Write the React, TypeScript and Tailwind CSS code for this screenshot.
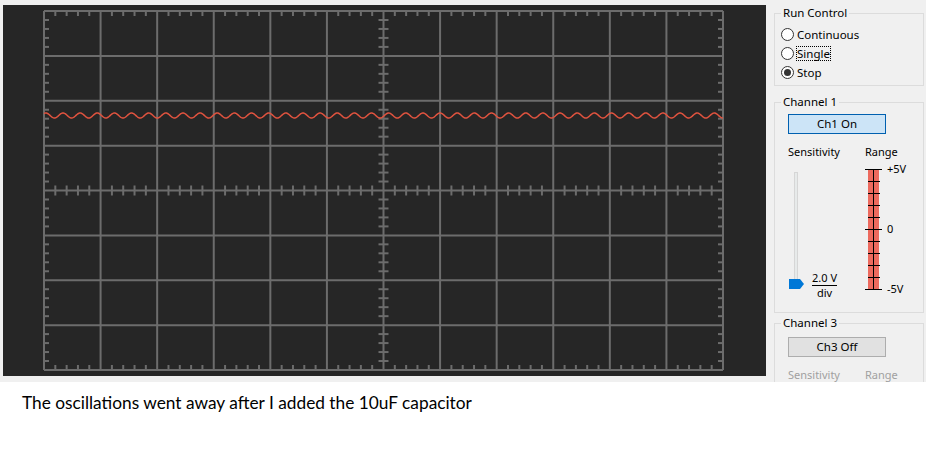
import React from "react";

// scope grid geometry, relative to the dark panel
const L = 41;
const T = 6;
const W = 679;
const H = 359;
const DX = W / 12;
const DY = H / 8;
const GRID = "#6c6c6c";

function ScopeGrid() {
  const items: React.ReactNode[] = [];
  for (let i = 0; i <= 12; i++) {
    const x = L + i * DX;
    items.push(<line key={"v" + i} x1={x} y1={T} x2={x} y2={T + H} />);
  }
  for (let j = 0; j <= 8; j++) {
    const y = T + j * DY;
    items.push(<line key={"h" + j} x1={L} y1={y} x2={L + W} y2={y} />);
  }
  const cx = L + W / 2;
  const cy = T + H / 2;
  // minor ticks along x
  for (let i = 1; i < 60; i++) {
    if (i % 5 === 0) continue;
    const x = L + (i * DX) / 5;
    items.push(<line key={"tt" + i} x1={x} y1={T} x2={x} y2={T + 5} />);
    items.push(<line key={"tb" + i} x1={x} y1={T + H - 5} x2={x} y2={T + H} />);
    items.push(<line key={"tc" + i} x1={x} y1={cy - 5} x2={x} y2={cy + 5} />);
  }
  // minor ticks along y
  for (let j = 1; j < 40; j++) {
    if (j % 5 === 0) continue;
    const y = T + (j * DY) / 5;
    items.push(<line key={"tl" + j} x1={L} y1={y} x2={L + 5} y2={y} />);
    items.push(<line key={"tr" + j} x1={L + W - 5} y1={y} x2={L + W} y2={y} />);
    items.push(<line key={"tm" + j} x1={cx - 5} y1={y} x2={cx + 5} y2={y} />);
  }

  const pts: string[] = [];
  for (let x = L; x <= L + W; x += 0.5) {
    const y = 110.5 - 2.5 * Math.cos((2 * Math.PI * (x - 60)) / 17.14);
    pts.push(`${x.toFixed(1)},${y.toFixed(2)}`);
  }

  return (
    <svg width="763" height="371" className="block">
      <g stroke={GRID} strokeWidth="2">{items}</g>
      <polyline points={pts.join(" ")} fill="none" stroke="#e0533f" strokeWidth="1.5" />
    </svg>
  );
}

function Radio({ label, checked, focus }: { label: string; checked?: boolean; focus?: boolean }) {
  return (
    <div className="flex h-[19px] items-center pl-[6px]">
      <span className="flex h-[13px] w-[13px] items-center justify-center rounded-full border border-[#333] bg-white">
        {checked && <span className="h-[7px] w-[7px] rounded-full bg-[#333]" />}
      </span>
      <span
        className={
          focus
            ? "ml-[2px] border border-dotted border-black leading-[13px]"
            : "ml-[3px] leading-[16px]"
        }
      >
        {label}
      </span>
    </div>
  );
}

function RangeScale() {
  const ticks = [];
  for (let i = 0; i <= 10; i++) {
    const y = 4.5 + i * 12;
    const long = i % 5 === 0;
    ticks.push(<line key={i} x1={long ? 0 : 3} y1={y} x2={long ? 17 : 15} y2={y} />);
  }
  return (
    <svg width="18" height="128" className="block">
      <rect x="3" y="4" width="11" height="120" fill="#ed6a5e" />
      <g stroke="#000" strokeWidth="1">
        <line x1="8.5" y1="4" x2="8.5" y2="125" />
        {ticks}
      </g>
    </svg>
  );
}

export default function App() {
  return (
    <div className="h-[468px] w-[926px] overflow-hidden bg-white font-['Noto_Sans',sans-serif] text-black">
      <div className="flex h-[382px] bg-[#f0f0f0]">
        <div className="ml-[3px] mt-[5px] h-[371px] w-[763px] bg-[#262626]">
          <ScopeGrid />
        </div>

        <div className="h-[382px] w-[160px] overflow-hidden pl-[8px] pt-[5px] text-[11.5px]">
          <fieldset className="h-[81px] w-[150px] border border-[#dcdcdc]">
            <legend className="ml-[6px] px-[2px] leading-[16px]">Run Control</legend>
            <div className="pt-[4px]">
              <Radio label="Continuous" />
              <Radio label="Single" focus />
              <Radio label="Stop" checked />
            </div>
          </fieldset>

          <fieldset className="mt-[8px] h-[219px] w-[150px] border border-[#dcdcdc]">
            <legend className="ml-[6px] px-[2px] leading-[16px]">Channel 1</legend>
            <div className="ml-[13px] mt-[4px] flex h-[20px] w-[98px] items-center justify-center border border-[#0060b0] bg-[#cce4f7]">
              Ch1 On
            </div>
            <div className="mt-[10px] flex pl-[13px] text-[11px] leading-[16px]">
              <span className="w-[77px]">Sensitivity</span>
              <span>Range</span>
            </div>
            <div className="flex h-[140px] pl-[13px] text-[11px]">
              <div className="relative h-full w-[17px]">
                <div className="absolute bottom-[11px] left-[6px] top-[12px] w-[4px] border border-[#d6d6d6] bg-[#e7eaea]" />
                <svg width="15" height="10" className="absolute left-[1px] top-[119px]">
                  <polygon points="0,0 11,0 15,5 11,10 0,10" fill="#0078d7" />
                </svg>
              </div>
              <div className="ml-[7px] mt-[111px] flex w-[25px] flex-col items-center leading-[14px]">
                <div className="w-full border-b border-black text-center">2.0 V</div>
                <div>div</div>
              </div>
              <div className="ml-[28px] mt-[5px]">
                <RangeScale />
              </div>
              <div className="ml-[4px] mt-[1px] flex h-[136px] flex-col justify-between leading-[16px]">
                <span>+5V</span>
                <span>0</span>
                <span>-5V</span>
              </div>
            </div>
          </fieldset>

          <fieldset className="mt-[2px] h-[120px] w-[150px] border border-[#dcdcdc]">
            <legend className="ml-[6px] px-[2px] leading-[16px]">Channel 3</legend>
            <div className="ml-[13px] mt-[6px] flex h-[20px] w-[98px] items-center justify-center border border-[#adadad] bg-[#e1e1e1]">
              Ch3 Off
            </div>
            <div className="mt-[10px] flex pl-[13px] text-[11px] leading-[16px] text-[#a0a0a0]">
              <span className="w-[77px]">Sensitivity</span>
              <span>Range</span>
            </div>
          </fieldset>
        </div>
      </div>

      <p className="pl-[22px] pt-[10px] font-['Lato',sans-serif] text-[17.3px] leading-[22px]">
        The oscillations went away after I added the 10uF capacitor
      </p>
    </div>
  );
}
